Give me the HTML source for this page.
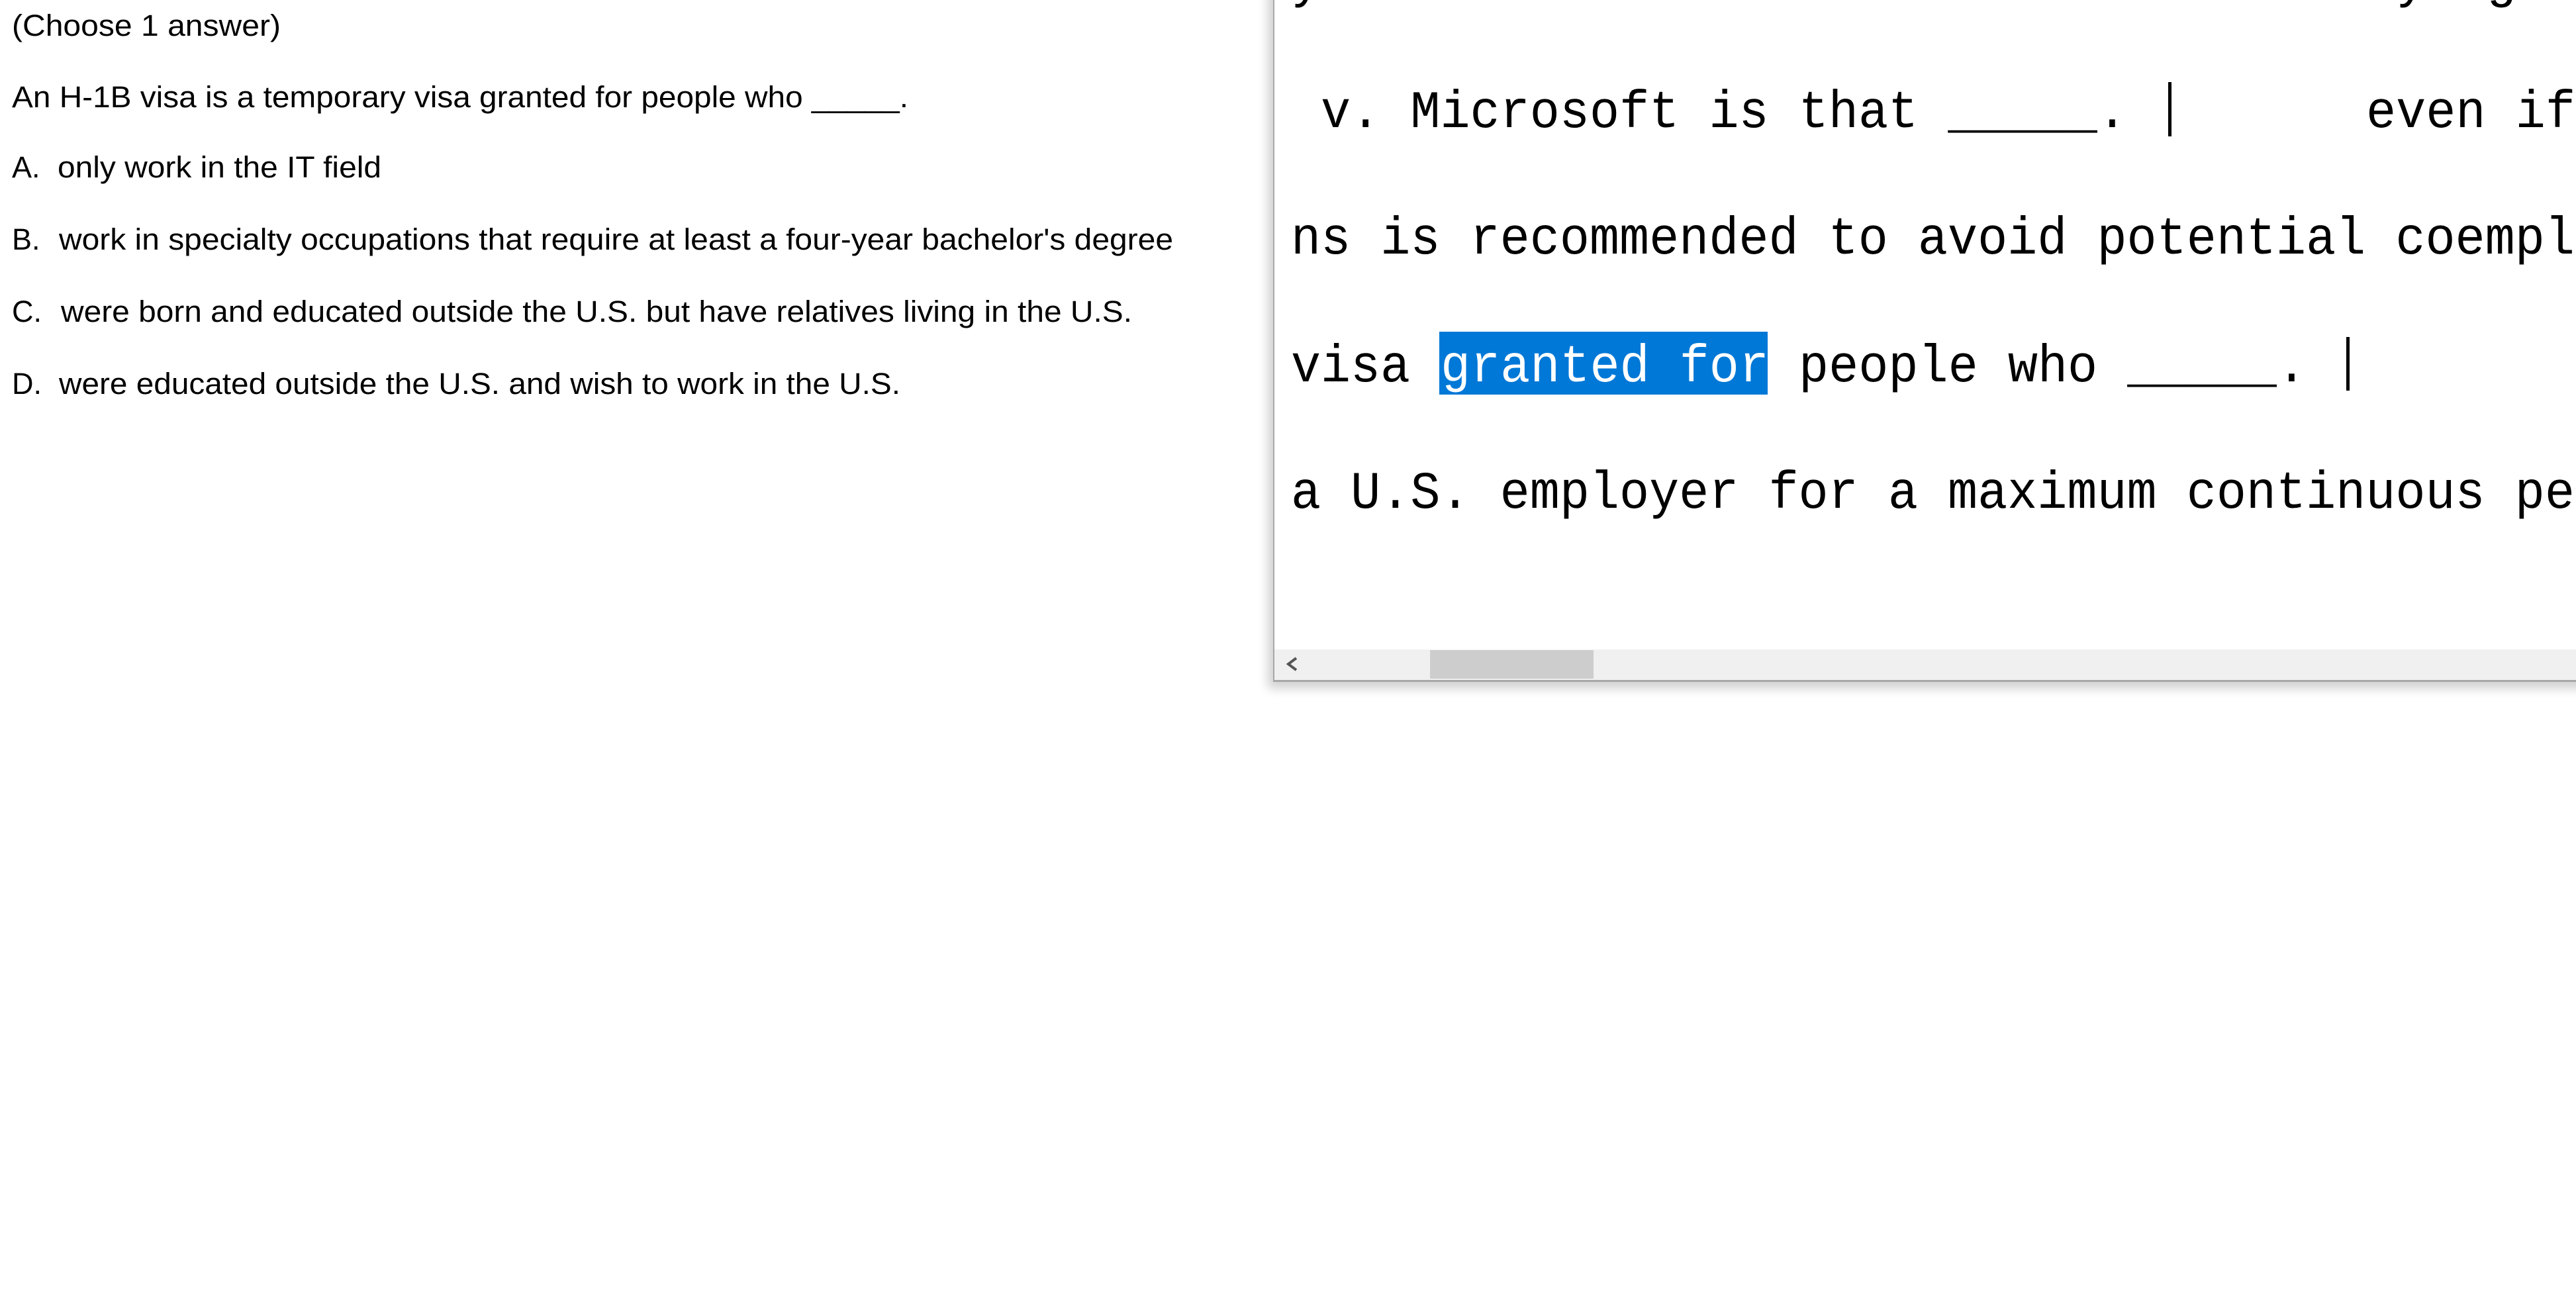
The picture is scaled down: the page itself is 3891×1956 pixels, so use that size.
<!DOCTYPE html>
<html><head><meta charset="utf-8"><style>
html,body{margin:0;padding:0;background:#fff;width:3891px;height:1956px;overflow:hidden}
svg{display:block}
</style></head><body>
<svg width="3891" height="1956" viewBox="0 0 3891 1956" xmlns="http://www.w3.org/2000/svg">
<rect width="3891" height="1956" fill="#fff"/>
<g font-family="Liberation Sans, Arial, sans-serif" font-size="45" fill="#000">
<text x="18" y="54" textLength="406" lengthAdjust="spacingAndGlyphs">(Choose 1 answer)</text>
<text x="18" y="162" textLength="1354" lengthAdjust="spacingAndGlyphs">An H-1B visa is a temporary visa granted for people who _____.</text>
<text x="18" y="268">A.</text>
<text x="87" y="268" textLength="489" lengthAdjust="spacingAndGlyphs">only work in the IT field</text>
<text x="18" y="377">B.</text>
<text x="89" y="377" textLength="1683" lengthAdjust="spacingAndGlyphs">work in specialty occupations that require at least a four-year bachelor's degree</text>
<text x="18" y="486">C.</text>
<text x="92" y="486" textLength="1618" lengthAdjust="spacingAndGlyphs">were born and educated outside the U.S. but have relatives living in the U.S.</text>
<text x="18" y="595">D.</text>
<text x="89" y="595" textLength="1271" lengthAdjust="spacingAndGlyphs">were educated outside the U.S. and wish to work in the U.S.</text>
</g>
<defs>
<filter id="sh" x="-5%" y="-5%" width="110%" height="115%"><feGaussianBlur stdDeviation="8"/></filter>
<clipPath id="cp"><rect x="1925" y="0" width="1966" height="1027"/></clipPath>
</defs>
<rect x="1915" y="-20" width="2000" height="1060" fill="#000" opacity="0.18" filter="url(#sh)"/>
<rect x="1923" y="-10" width="1980" height="1040" fill="#a8a8a8"/>
<rect x="1925" y="-10" width="1980" height="1037" fill="#fff"/>
<g clip-path="url(#cp)" font-family="Liberation Mono, DejaVu Sans Mono, monospace" font-size="80" fill="#000">
<text x="1950" y="-5">y</text>
<text x="3619" y="-5">y</text>
<text x="3754" y="-5">g</text>
<text x="1995" y="192" textLength="1218" lengthAdjust="spacingAndGlyphs">v. Microsoft is that _____.</text>
<rect x="3275" y="124" width="5" height="82" fill="#000"/>
<text x="3574" y="192" textLength="316" lengthAdjust="spacingAndGlyphs">even if</text>
<text x="1950" y="383" textLength="1984" lengthAdjust="spacingAndGlyphs">ns is recommended to avoid potential coemplo</text>
<rect x="2174" y="501" width="496" height="95" fill="#0078d7"/>
<text x="1950" y="576" textLength="180" lengthAdjust="spacingAndGlyphs">visa</text>
<text x="2176" y="576" textLength="496" lengthAdjust="spacingAndGlyphs" fill="#fff">granted for</text>
<text x="2717" y="576" textLength="767" lengthAdjust="spacingAndGlyphs">people who _____.</text>
<rect x="3544" y="509" width="5" height="81" fill="#000"/>
<text x="1950" y="767" textLength="1984" lengthAdjust="spacingAndGlyphs">a U.S. employer for a maximum continuous per</text>
<rect x="1925" y="981" width="1966" height="46" fill="#f0f0f0"/>
<rect x="2160" y="982" width="247" height="43" fill="#cdcdcd"/>
<path d="M1958 994 L1946 1003 L1958 1012" fill="none" stroke="#555" stroke-width="4"/>
</g>
</svg>
</body></html>
